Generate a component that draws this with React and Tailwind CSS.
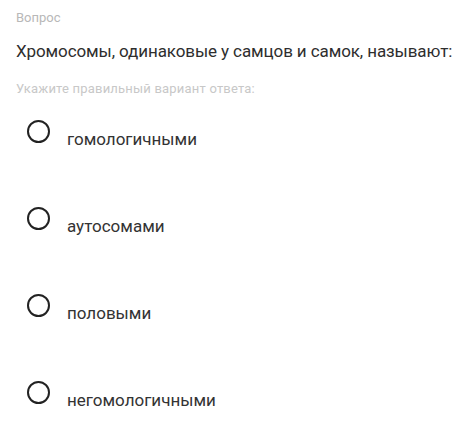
import React, { useState } from "react";

const options = ["гомологичными", "аутосомами", "половыми", "негомологичными"];

export default function App() {
    const [selected, setSelected] = useState(null);

    return (
        <div className="w-[474px] h-[432px] overflow-hidden bg-white px-4 pt-[10px] font-['Roboto',sans-serif]">
            <div className="text-[13px] leading-[16px] text-[#b8b8b8]">Вопрос</div>
            <div className="mt-[15px] whitespace-nowrap text-[17px] leading-[20px] tracking-[-0.1px] text-[#2e2e2e]">
                Хромосомы, одинаковые у самцов и самок, называют:
            </div>
            <div className="mt-[20px] text-[13px] leading-[16px] tracking-[0.2px] text-[#c8c8c8]">
                Укажите правильный вариант ответа:
            </div>

            <div className="mt-[23px] flex flex-col gap-[58px]">
                {options.map((opt, i) => (
                    <label
                        key={opt}
                        onClick={() => setSelected(i)}
                        className="flex items-start cursor-pointer"
                    >
                        <span className="ml-[11px] w-[23px] h-[23px] shrink-0 rounded-full border-[2.5px] border-[#222222] flex items-center justify-center">
                            {selected === i && <span className="w-[10px] h-[10px] rounded-full bg-[#222222]" />}
                        </span>
                        <span className="ml-[17px] mt-[9px] text-[17px] leading-[20px] text-[#333333]">{opt}</span>
                    </label>
                ))}
            </div>
        </div>
    );
}
